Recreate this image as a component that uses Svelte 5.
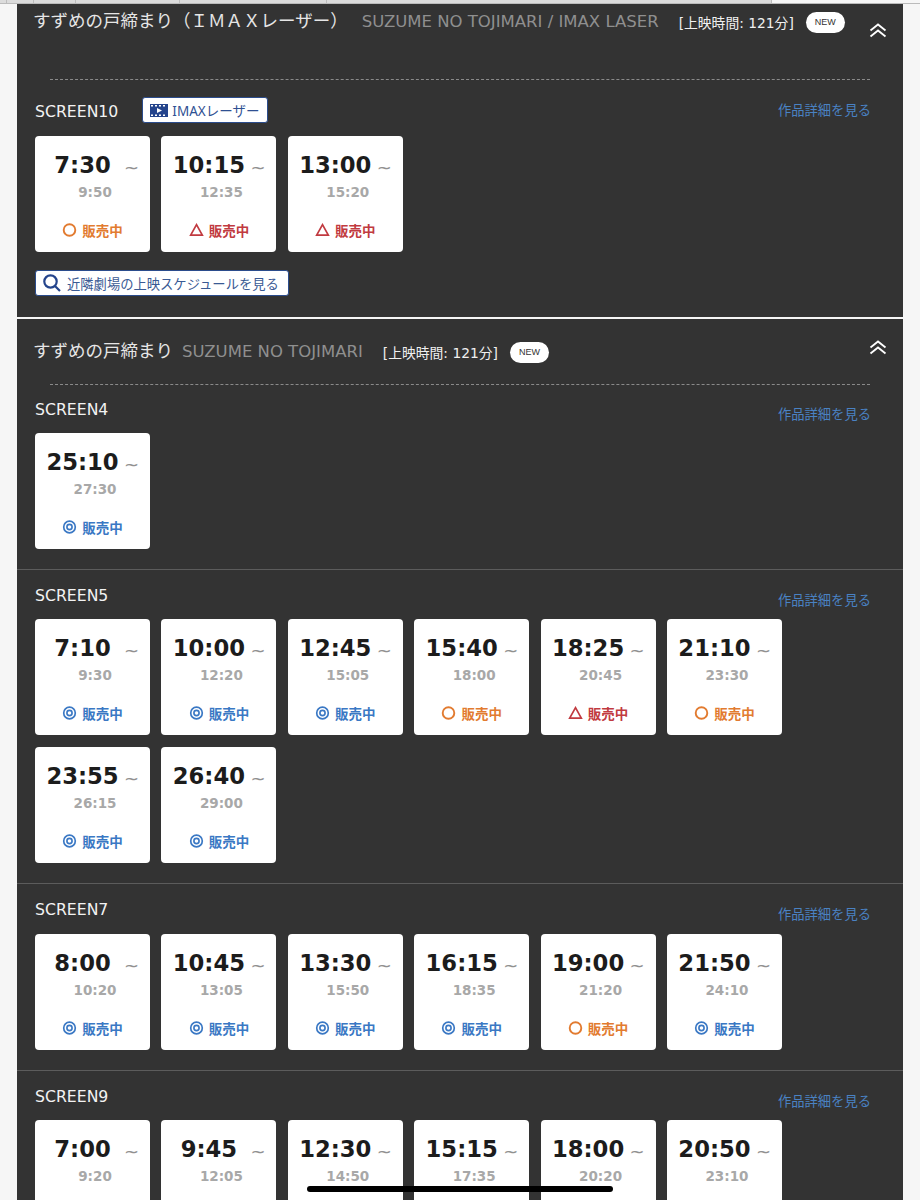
<script>
  const O = 'o';
  const T = 't';
  const D = 'd';

  const imaxScreens = [
    {
      name: 'SCREEN10',
      rows: [
        ['7:30', '9:50', O],
        ['10:15', '12:35', T],
        ['13:00', '15:20', T]
      ]
    }
  ];

  // the last row runs off the bottom of the page, its status line is never seen
  const screens = [
    { name: 'SCREEN4', rows: [['25:10', '27:30', D]] },
    {
      name: 'SCREEN5',
      rows: [
        ['7:10', '9:30', D],
        ['10:00', '12:20', D],
        ['12:45', '15:05', D],
        ['15:40', '18:00', O],
        ['18:25', '20:45', T],
        ['21:10', '23:30', O],
        ['23:55', '26:15', D],
        ['26:40', '29:00', D]
      ]
    },
    {
      name: 'SCREEN7',
      rows: [
        ['8:00', '10:20', D],
        ['10:45', '13:05', D],
        ['13:30', '15:50', D],
        ['16:15', '18:35', D],
        ['19:00', '21:20', O],
        ['21:50', '24:10', D]
      ]
    },
    {
      name: 'SCREEN9',
      rows: [
        ['7:00', '9:20'],
        ['9:45', '12:05'],
        ['12:30', '14:50'],
        ['15:15', '17:35'],
        ['18:00', '20:20'],
        ['20:50', '23:10']
      ]
    }
  ];
</script>

{#snippet chevrons()}
  <svg class="chevrons" width="18" height="15" viewBox="0 0 18 15" fill="none" stroke="#fff" stroke-width="1.8">
    <path d="M1.5 7.5 9 1.5l7.5 6" />
    <path d="M1.5 13.5 9 7.5l7.5 6" />
  </svg>
{/snippet}

{#snippet screenRow(screen, tagged)}
  <div class="screen">
    <div class="head" class:tagged>
      <div class="head-left">
        <span class="screen-name">{screen.name}</span>
        {#if tagged}
          <span class="imax-tag">
            <svg width="18" height="13" viewBox="0 0 18 13">
              <rect width="18" height="13" fill="#24448c" />
              <g fill="#fff">
                <rect x="1" y="1" width="2" height="1.5" />
                <rect x="5" y="1" width="2" height="1.5" />
                <rect x="9" y="1" width="2" height="1.5" />
                <rect x="13" y="1" width="2" height="1.5" />
                <rect x="1" y="10.5" width="2" height="1.5" />
                <rect x="5" y="10.5" width="2" height="1.5" />
                <rect x="9" y="10.5" width="2" height="1.5" />
                <rect x="13" y="10.5" width="2" height="1.5" />
                <path d="M7 4l5 2.5L7 9z" />
              </g>
            </svg>
            IMAXレーザー
          </span>
        {/if}
      </div>
      <span class="detail-link">作品詳細を見る</span>
    </div>
    <div class="cards">
      {#each screen.rows as [start, end, status]}
        <div class="card">
          <div class="times">
            <span class="start">{start}</span>
            <span class="tilde">~</span>
          </div>
          <div class="end">{end}</div>
          {#if status}
            <div class="status {status}">
              <svg width="15" height="15" viewBox="0 0 15 15" fill="none" stroke="currentColor">
                {#if status === O}
                  <circle cx="7.5" cy="7" r="5.8" stroke-width="1.9" />
                {:else if status === T}
                  <path d="M7.5 1.7 13.3 12.1H1.7z" stroke-width="1.7" />
                {:else}
                  <circle cx="7.5" cy="7" r="5.8" stroke-width="1.7" />
                  <circle cx="7.5" cy="7" r="2.6" stroke-width="1.6" />
                {/if}
              </svg>
              <span>販売中</span>
            </div>
          {/if}
        </div>
      {/each}
    </div>
  </div>
{/snippet}

<div class="page">
  <div class="topbar">
    <span style="width:7px"></span>
    <span style="width:27px"></span>
    <span style="width:42px"></span>
    <span style="width:104px"></span>
    <span style="width:147px"></span>
    <span style="width:445px"></span>
  </div>

  <section class="panel first">
    <div class="title-row">
      <h2 class="title">すずめの戸締まり（ＩＭＡＸレーザー）</h2>
      <span class="title-en">SUZUME NO TOJIMARI / IMAX LASER</span>
      <span class="runtime">[上映時間: 121分]</span>
      <span class="new">NEW</span>
      {@render chevrons()}
    </div>
    <div class="dashed"></div>
    {#each imaxScreens as screen}
      {@render screenRow(screen, true)}
    {/each}
    <div class="nearby">
      <span class="nearby-btn">
        <svg width="20" height="20" viewBox="0 0 20 20" fill="none" stroke="#24448c" stroke-width="2.2">
          <circle cx="8.5" cy="8.5" r="6.2" />
          <path d="M13 13l5 5" />
        </svg>
        近隣劇場の上映スケジュールを見る
      </span>
    </div>
  </section>

  <section class="panel second">
    <div class="title-row">
      <h2 class="title">すずめの戸締まり</h2>
      <span class="title-en">SUZUME NO TOJIMARI</span>
      <span class="runtime">[上映時間: 121分]</span>
      <span class="new">NEW</span>
      {@render chevrons()}
    </div>
    <div class="dashed"></div>
    {#each screens as screen}
      {@render screenRow(screen, false)}
    {/each}
  </section>

  <div class="home-indicator"></div>
</div>

<style>
  :global(body) {
    background: #f6f6f6;
  }

  .page {
    position: relative;
    height: 1200px;
    overflow: hidden;
    font-family: "DejaVu Sans", "Noto Sans CJK JP", sans-serif;
  }

  .topbar {
    display: flex;
    height: 4px;
    box-sizing: border-box;
    border-bottom: 1px solid #bbb;
  }
  .topbar span {
    background: #dcdcdc;
    border-right: 1px solid #bdbdbd;
    box-sizing: border-box;
  }

  .panel {
    margin: 0 17px;
    background: #333333;
  }
  .panel.first {
    height: 313px;
    margin-bottom: 2px;
    padding-top: 4px;
    box-sizing: border-box;
  }
  .panel.second {
    padding-top: 19px;
  }

  .title-row {
    display: flex;
    align-items: center;
    height: 24px;
    padding-left: 16px;
    padding-right: 16px;
  }
  .title {
    margin: 0 8px 0 0;
    font-size: 17.5px;
    font-weight: 400;
    line-height: 24px;
    color: #e6e6e6;
    font-family: "Noto Sans CJK JP", sans-serif;
  }
  .first .title {
    margin-right: 14px;
  }
  .second .title {
    margin-right: 9px;
  }
  .title-en {
    margin-right: 20px;
    padding-top: 3px;
    font-size: 16.5px;
    color: #8f8f8f;
  }
  .runtime {
    margin-right: 12px;
    font-size: 13.8px;
    color: #f0f0f0;
    padding-top: 3px;
  }
  .new {
    width: 39px;
    height: 21px;
    border-radius: 11px;
    background: #fff;
    color: #333;
    font-family: "Liberation Sans", sans-serif;
    font-size: 9px;
    line-height: 21px;
    text-align: center;
    margin-top: 5px;
  }
  .chevrons {
    margin-left: auto;
  }
  .first .chevrons {
    margin-top: 20px;
  }
  .second .chevrons {
    margin-top: -6px;
  }

  .dashed {
    margin-left: 33px;
    margin-right: 33px;
    border-top: 1px dashed #8a8a8a;
  }
  .first .dashed {
    margin-top: 47px;
  }
  .second .dashed {
    margin-top: 22px;
    margin-bottom: -1px;
  }

  .screen {
    padding: 14px 32px 20px 18px;
    border-bottom: 1px solid #5c5c5c;
  }
  .first .screen {
    padding-top: 17px;
    padding-bottom: 18px;
    border-bottom: 0;
  }
  .screen:last-child {
    border-bottom: 0;
  }
  .head {
    display: flex;
    justify-content: space-between;
    align-items: flex-start;
    height: 22px;
    margin-bottom: 13px;
  }
  .head.tagged {
    height: 26px;
  }
  .second .screen:nth-child(5) .head {
    margin-bottom: 14px;
  }
  .head-left {
    display: flex;
    align-items: center;
    gap: 24px;
  }
  .screen-name {
    padding-top: 1px;
    font-size: 15.7px;
    line-height: 22px;
    color: #f2f2f2;
  }
  .head.tagged .screen-name {
    padding-top: 3px;
  }
  .detail-link {
    margin-top: 6px;
    font-size: 13.3px;
    line-height: 20px;
    color: #4a82c3;
    font-family: "Noto Sans CJK JP", sans-serif;
  }
  .head.tagged .detail-link {
    margin-top: 3px;
  }
  .imax-tag {
    display: flex;
    align-items: center;
    gap: 4px;
    height: 26px;
    width: 126px;
    box-sizing: border-box;
    padding-left: 7px;
    background: #fff;
    border: 1px solid #2b4c8c;
    border-radius: 3px;
    font-family: "Noto Sans", "Noto Sans CJK JP", sans-serif;
    font-size: 13.5px;
    color: #2f5092;
  }

  .cards {
    display: flex;
    flex-wrap: wrap;
    gap: 12px 11.4px;
  }
  .card {
    width: 115px;
    height: 116px;
    box-sizing: border-box;
    background: #fff;
    border-radius: 4px;
    padding-top: 15px;
    font-family: "DejaVu Sans", sans-serif;
  }
  .times {
    display: flex;
    align-items: center;
    height: 28px;
  }
  .start {
    width: 95px;
    text-align: center;
    font-size: 22.7px;
    font-weight: 700;
    color: #1c1c1c;
  }
  .tilde {
    margin-left: -6px;
    font-size: 18px;
    color: #909090;
    padding-top: 5px;
  }
  .end {
    margin-top: 6px;
    padding-left: 5px;
    text-align: center;
    font-size: 13.5px;
    font-weight: 700;
    line-height: 15px;
    color: #a8a8a8;
  }
  .status {
    display: flex;
    justify-content: center;
    align-items: center;
    gap: 5px;
    margin-top: 20px;
    font-family: "Noto Sans CJK JP", sans-serif;
    font-size: 13.5px;
    font-weight: 700;
    line-height: 20px;
  }
  .status.o {
    color: #e27b30;
  }
  .status.t {
    color: #c13a40;
  }
  .status.d {
    color: #3a78c4;
  }

  .nearby {
    padding-left: 18px;
  }
  .nearby-btn {
    display: inline-flex;
    align-items: center;
    gap: 5px;
    width: 254px;
    height: 26px;
    box-sizing: border-box;
    padding-left: 6px;
    background: #fff;
    border: 1.5px solid #2b4c8c;
    border-radius: 3px;
    font-family: "Noto Sans CJK JP", sans-serif;
    font-size: 13.3px;
    color: #3a5a94;
    white-space: nowrap;
  }

  .home-indicator {
    position: absolute;
    left: 307px;
    top: 1186px;
    width: 306px;
    height: 6px;
    border-radius: 3px;
    background: #000;
  }
</style>
